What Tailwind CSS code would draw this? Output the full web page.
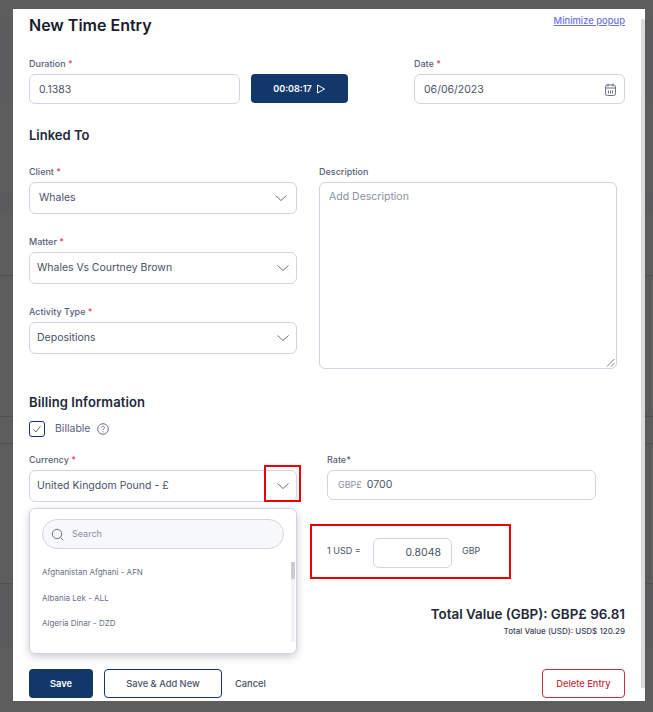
<!doctype html>
<html lang="en"><head><meta charset="utf-8"><title>New Time Entry</title>
<script src="https://cdn.jsdelivr.net/npm/@tailwindcss/browser@4"></script></head>
<body class="m-0 bg-[#5d5d5d] font-['Inter',sans-serif] text-[#4b5168]">
<div class="relative h-[712px] w-[653px] overflow-hidden pt-[9px] pl-[13px]">
  <div class="absolute inset-x-0 top-[20px] h-[80px] bg-[#5a5c5e]"></div>
  <div class="absolute inset-x-0 top-[192px] h-[22px] bg-[#5a5b5d]"></div>
  <div class="absolute inset-x-0 top-[583px] h-[65px] bg-[#595b5d]"></div>
  <div class="absolute inset-x-0 top-[275px] h-px bg-[#505050]"></div>
  <div class="absolute inset-x-0 top-[416px] h-px bg-[#505050]"></div>
  <div class="absolute inset-x-0 top-[443px] h-px bg-[#505050]"></div>
  <div class="absolute inset-x-0 top-[583px] h-px bg-[#505050]"></div>
  <div class="absolute left-[600px] top-[275px] h-[141px] w-[50px] rounded-md border border-[#535353]"></div>
  <div class="absolute left-[600px] top-[443px] h-[140px] w-[50px] rounded-md border border-[#535353]"></div>
<main class="relative h-[692px] w-[632px] overflow-hidden bg-white pl-4 pr-[20px]">
  <div class="absolute right-0 top-[10px] h-[669px] w-1 bg-[#dcdcdc]"></div>
  <header class="flex h-[32px] items-center justify-between">
    <h1 class="text-[16px] font-semibold text-[#171c2e]">New Time Entry</h1>
    <a class="-mt-2 text-[9.400px] font-medium text-[#6c70e8] underline" href="#">Minimize popup</a>
  </header>
  <section class="mt-[15px] flex items-start">
    <div class="w-[211px]">
      <label class="block h-[18px] text-[9px] font-medium leading-[16px] text-[#5a607a]">Duration <span class="text-[#d9475a]">*</span></label>
      <div class="flex h-[30px] items-center rounded-md border border-[#d2d4e2] pl-[9px] pt-px text-[10.500px]">0.1383</div>
    </div>
    <button class="ml-[11px] mt-[18px] flex h-[29px] w-[97px] items-center justify-center gap-1 rounded bg-[#12376b] text-[9px] font-semibold text-white">00:08:17
      <svg class="size-[10px]" viewBox="0 0 10 10" fill="none" stroke="currentColor" stroke-width="1"><path d="M1.500 1v8l7-4z"/></svg></button>
    <div class="ml-[66px] w-[211px]">
      <label class="block h-[18px] text-[9px] font-medium leading-[16px] text-[#5a607a]">Date <span class="text-[#d9475a]">*</span></label>
      <div class="flex h-[30px] items-center justify-between rounded-md border border-[#d2d4e2] pl-[9px] pr-[8px] pt-px text-[10.500px]">06/06/2023
        <svg class="h-[13px] w-[11px] text-[#6b7187]" viewBox="0 0 11 13" fill="none" stroke="currentColor"><rect x=".5" y="2" width="10" height="10.500" rx="1.800"/><path d="M.5 5h10M3 .5v3M8 .5v3M3.500 7.500v3M5.500 7.500v3M7.500 7.500v3"/></svg></div>
    </div>
  </section>
  <h2 class="mt-[23px] h-[16px] text-[13px] font-semibold leading-[16px] text-[#232839]">Linked To</h2>
  <section class="mt-[21px] flex h-[206px] items-start">
    <div class="flex w-[268px] flex-col gap-[20px]">
      <div><label class="block h-[18px] text-[9px] font-medium leading-[16px] text-[#5a607a]">Client <span class="text-[#d9475a]">*</span></label>
        <div class="flex h-[32px] items-center justify-between rounded-md border border-[#d2d4e2] pl-[9px] pr-[9px] text-[10.500px]">Whales
        <svg class="h-[6px] w-[12px] text-[#6b7187]" viewBox="0 0 12 6" fill="none" stroke="currentColor"><path d="M.5.500l5.500 5 5.500-5"/></svg></div></div>
      <div><label class="block h-[18px] text-[9px] font-medium leading-[16px] text-[#5a607a]">Matter <span class="text-[#d9475a]">*</span></label>
        <div class="flex h-[32px] items-center justify-between rounded-md border border-[#d2d4e2] pl-[7px] pr-[7px] text-[10.500px]">Whales Vs Courtney Brown
        <svg class="h-[6px] w-[12px] text-[#6b7187]" viewBox="0 0 12 6" fill="none" stroke="currentColor"><path d="M.5.500l5.500 5 5.500-5"/></svg></div></div>
      <div><label class="block h-[18px] text-[9px] font-medium leading-[16px] text-[#5a607a]">Activity Type <span class="text-[#d9475a]">*</span></label>
        <div class="flex h-[32px] items-center justify-between rounded-md border border-[#d2d4e2] pl-[7px] pr-[7px] text-[10.500px]">Depositions
        <svg class="h-[6px] w-[12px] text-[#6b7187]" viewBox="0 0 12 6" fill="none" stroke="currentColor"><path d="M.5.500l5.500 5 5.500-5"/></svg></div></div>
    </div>
    <div class="ml-[22px] w-[298px]">
      <label class="block h-[18px] text-[9px] font-medium leading-[16px] text-[#5a607a]">Description</label>
      <div class="relative h-[187px] rounded-md border border-[#d2d4e2] pl-[9px] pt-1.5 text-[10.500px] text-[#8a8fa1]">Add Description
        <svg class="absolute bottom-[1px] right-[1px] size-[9px] text-[#555]" viewBox="0 0 9 9" fill="none" stroke="currentColor" stroke-width=".8"><path d="M8.500 1L1 8.500M8.500 5L5 8.500"/></svg></div>
    </div>
  </section>
  <h2 class="mt-[24px] h-[16px] text-[13px] font-semibold leading-[16px] tracking-[0.1px] text-[#232839]">Billing Information</h2>
  <section class="mt-[11px] flex h-[16px] items-center">
    <span class="flex size-[16px] items-center justify-center rounded-[3px] border border-[#12376b]"><svg class="size-[10px] text-[#6b7187]" viewBox="0 0 10 10" fill="none" stroke="currentColor"><path d="M1.500 5.500l2.500 2.500 4.500-6"/></svg></span>
    <span class="ml-[10px] text-[10.500px] text-[#5a607a]">Billable</span>
    <svg class="ml-[6px] size-[12px] text-[#6b7187]" viewBox="0 0 12 12" fill="none" stroke="currentColor"><circle cx="6" cy="6" r="5.300"/><path d="M4.500 4.700c0-2 3-2 3-.2 0 1.200-1.500 1.200-1.500 2.500M6 8.300v1"/></svg>
  </section>
  <section class="mt-[15px] flex items-start">
    <div class="w-[268px]">
      <label class="block h-[18px] text-[9px] font-medium leading-[16px] text-[#5a607a]">Currency <span class="text-[#d9475a]">*</span></label>
      <div class="flex h-[32px] items-center justify-between rounded-md border border-[#d2d4e2] pl-[7px] pr-[7px] text-[10.500px]">United Kingdom Pound - £
      <svg class="h-[6px] w-[12px] text-[#6b7187]" viewBox="0 0 12 6" fill="none" stroke="currentColor"><path d="M.5.500l5.500 5 5.500-5"/></svg></div>
    </div>
    <div class="ml-[30px] w-[269px]">
      <label class="block h-[18px] text-[9px] font-medium leading-[16px] text-[#5a607a]">Rate*</label>
      <div class="flex h-[30px] items-center rounded-md border border-[#d2d4e2] pl-2.5 text-[10.500px]"><span class="mr-[5px] text-[9px] text-[#8a8fa1]">GBP£</span>0700</div>
      <div class="mt-[38px] flex items-center text-[9px]">
        <span class="-mt-[4px] w-[46px]">1 USD =</span>
        <div class="flex h-[30px] w-[79px] items-center justify-end rounded-md border border-[#d2d4e2] pr-2.5 text-[10.500px]">0.8048</div>
        <span class="-mt-[4px] ml-[10px]">GBP</span>
      </div>
    </div>
  </section>
  <section class="mt-[36px] text-right">
    <p class="text-[13.400px] font-semibold leading-[20px] text-[#232839]">Total Value (GBP): GBP£ 96.81</p>
    <p class="mt-[1px] text-[8px] font-medium leading-[12px] text-[#3d4358]">Total Value (USD): USD$ 120.29</p>
  </section>
  <footer class="mt-[32px] flex h-[29px] items-center text-[9.300px]">
    <button class="h-[29px] w-[64px] rounded bg-[#12376b] font-semibold text-white">Save</button>
    <button class="ml-[11px] h-[29px] w-[118px] rounded border border-[#12376b] font-medium">Save &amp; Add New</button>
    <button class="ml-[13px] font-medium">Cancel</button>
    <button class="ml-auto h-[29px] w-[83px] rounded border border-[#c6303e] font-medium text-[#c6303e]">Delete Entry</button>
  </footer>

  <div class="absolute left-4 top-[499px] h-[146px] w-[268px] rounded-md border border-[#d2d4e2] bg-white shadow-[0_3px_8px_rgba(0,0,0,0.2)]">
    <div class="mx-3 mt-[10px] flex h-[30px] w-[242px] items-center rounded-full border border-[#d2d4e2] bg-[#f7f8fb] pl-2 text-[9px] text-[#8a8fa1]">
      <svg class="mr-2 size-[13px] text-[#6b7187]" viewBox="0 0 13 13" fill="none" stroke="currentColor"><circle cx="6" cy="6" r="4.700"/><path d="M9.500 9.500l2.800 2.800"/></svg>Search</div>
    <ul class="mx-3 mt-[17px] flex flex-col gap-[12.500px] text-[8px] leading-[13px] text-[#6a6f86]">
      <li>Afghanistan Afghani - AFN</li><li>Albania Lek - ALL</li><li>Algeria Dinar - DZD</li>
    </ul>
    <div class="absolute right-[1px] top-[53px] h-[80px] w-[4px] bg-[#f3f3f3]"><div class="h-[17px] bg-[#cdcdcd]"></div></div>
  </div>
  <div class="absolute left-[251px] top-[456px] h-[37px] w-[37px] border-2 border-[#f00000]"></div>
  <div class="absolute left-[297px] top-[515px] h-[55px] w-[201px] border-2 border-[#f00000]"></div>
</main>
</div>
</body></html>
